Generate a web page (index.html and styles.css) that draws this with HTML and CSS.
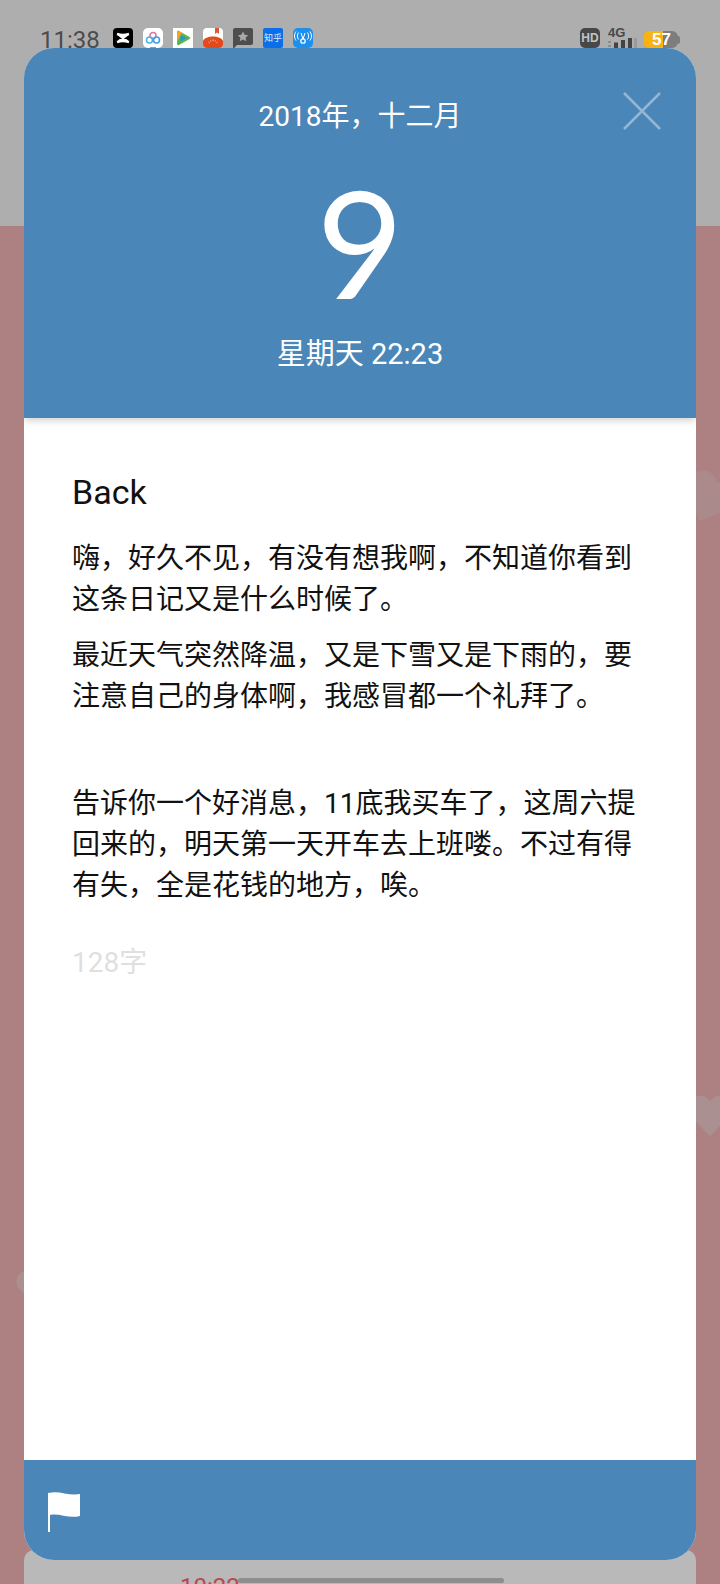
FILE: index.html
```html
<!DOCTYPE html>
<html lang="zh-CN">
<head>
    <meta charset="UTF-8">
    <title>Diary</title>
    <link rel="stylesheet" href="styles.css">
</head>
<body>
    <div class="screen">
        <div class="topArea">
            <div class="statusBar">
                <span class="clock">11:38</span>
                <div class="appIcons">
                    <svg class="appIcon" viewBox="0 0 20 20"><rect width="20" height="20" rx="4" fill="#000"/><path d="M4 6c3 1 9 1 12 0M4 14c3-1 9-1 12 0M5.500 6.500l9 7M14.500 6.500l-9 7" stroke="#fff" stroke-width="2.400" fill="none"/></svg>
                    <svg class="appIcon" viewBox="0 0 20 20"><rect width="20" height="20" rx="5" fill="#fff"/><path d="M7 19h6v1H7z" fill="#9a8ec8"/><circle cx="10" cy="7.500" r="3" fill="none" stroke="#e8709a" stroke-width="1.500"/><circle cx="6.500" cy="12" r="3" fill="none" stroke="#4ab4e6" stroke-width="1.600"/><circle cx="13.500" cy="12" r="3" fill="none" stroke="#3c9fe0" stroke-width="1.600"/></svg>
                    <svg class="appIcon" viewBox="0 0 20 20"><rect width="20" height="20" fill="#fff"/><path d="M4 4c0-1 1-1.500 2-1l10.500 6c1 .6 1 1.400 0 2L6 17c-1 .5-2 0-2-1z" fill="#56b848"/><path d="M4 4c0-1 1-1.500 2-1l3 1.700-5 9z" fill="#f2a422"/><path d="M7.500 7l6 3-6 3.500z" fill="#2a92e0"/></svg>
                    <svg class="appIcon" viewBox="0 0 20 20"><rect width="20" height="20" rx="4" fill="#fff"/><path d="M12 0h4v6l-2-1.500L12 6z" fill="#d9583a"/><path d="M0 13c2-6 18-6 20 0v3a4 4 0 0 1-4 4H4a4 4 0 0 1-4-4z" fill="#e2491c"/><path d="M5.500 14l1 .8M10 11.500v1.500M14.500 14l-1 .8M7.500 12.500l.5 1M12.500 12.500l-.5 1" stroke="#fbd9a0" stroke-width="1"/></svg>
                    <svg class="appIcon" viewBox="0 0 20 20"><path d="M2 0h16a2 2 0 0 1 2 2v13a2 2 0 0 1-2 2H4l-3 3H0V2a2 2 0 0 1 2-2z" fill="#4e4e4e"/><path d="M10 3.500l1.700 3.300 3.500.5-2.600 2.400.7 3.500-3.300-1.700-3.300 1.700.7-3.500-2.600-2.400 3.500-.5z" fill="#a8a8a8"/></svg>
                    <div class="zhihuIcon">知乎</div>
                    <svg class="appIcon" viewBox="0 0 20 20"><rect width="20" height="20" rx="5" fill="#1d8fec"/><circle cx="10" cy="13" r="2.200" fill="none" stroke="#fff" stroke-width="1.300"/><path d="M8 5l2 6 2-6M5.500 4.500c-1.500 2-1.500 5 0 7M14.500 4.500c1.500 2 1.500 5 0 7M3 3.500c-2 3-2 6 0 9M17 3.500c2 3 2 6 0 9" stroke="#fff" stroke-width="1" fill="none"/></svg>
                </div>
                <div class="statusRight">
                    <div class="hdBadge">HD</div>
                    <div class="signal">
                        <span class="signalLabel">4G</span>
                        <svg class="signalBars" viewBox="0 0 30 10"><rect x="0" y="3" width="3" height="2" fill="#8d8d8d"/><rect x="0" y="7" width="3" height="2" fill="#8d8d8d"/><rect x="6" y="4.500" width="4" height="5.500" fill="#444"/><rect x="13" y="2" width="4" height="8" fill="#444"/><rect x="20" y="0" width="4" height="10" fill="#444"/><rect x="26" y="0" width="3" height="10" fill="#9a9a9a"/></svg>
                    </div>
                    <div class="battery"><span class="batteryLevel"></span><span class="batteryText">57</span></div>
                    <span class="batteryNub"></span>
                </div>
            </div>
        </div>
        <div class="bgArea">
            <svg class="heart heartA" viewBox="0 0 40 40"><path d="M20 37L4 20C-3 10 12-2 20 9c8-11 23 1 16 11z"/></svg>
            <svg class="heart heartB" viewBox="0 0 40 40"><path d="M20 37L4 20C-3 10 12-2 20 9c8-11 23 1 16 11z"/></svg>
            <svg class="heart heartC" viewBox="0 0 40 40"><path d="M20 37L4 20C-3 10 12-2 20 9c8-11 23 1 16 11z"/></svg>
        </div>
        <div class="behindCard">
            <span class="behindTime">10:22</span>
        </div>
        <div class="homeBar"></div>

        <div class="diaryCard">
            <header class="diaryHead">
                <div class="headMonth">2018年，十二月</div>
                <svg class="closeIcon" viewBox="0 0 38 38"><path d="M1 1l36 36M37 1L1 37" stroke="#fff" stroke-width="2.500" fill="none"/></svg>
                <div class="headDay">9</div>
                <div class="headTime">星期天 22:23</div>
            </header>
            <main class="diaryBody">
                <p class="backTitle">Back</p>
                <p>嗨，好久不见，有没有想我啊，不知道你看到这条日记又是什么时候了。</p>
                <p>最近天气突然降温，又是下雪又是下雨的，要注意自己的身体啊，我感冒都一个礼拜了。</p>
                <p class="emptyLine"><br></p>
                <p>告诉你一个好消息，11底我买车了，这周六提回来的，明天第一天开车去上班喽。不过有得有失，全是花钱的地方，唉。</p>
                <p class="wordCount">128字</p>
            </main>
            <footer class="diaryFoot">
                <svg class="flagIcon" viewBox="0 0 32 40"><path d="M0 1c11-3 20 3 32 1v22c-12 3-20-3-30-1v17H0z" fill="#fff"/></svg>
            </footer>
        </div>
    </div>
</body>
</html>
```

FILE: styles.css
```css
* {
    box-sizing: border-box;
}

body {
    margin: 0;
    font-family: Roboto, "Noto Sans CJK SC", sans-serif;
    overflow: hidden;
}

.screen {
    position: relative;
    width: 720px;
    height: 1584px;
    display: flex;
    flex-direction: column;
    background-color: #ad8082;
    overflow: hidden;
}

.topArea {
    height: 226px;
    background-color: #aeaeae;
}

.statusBar {
    display: flex;
    align-items: flex-start;
    padding: 28px 0 0 40px;
}

.clock {
    font-size: 24px;
    line-height: 22px;
    margin-top: 1px;
    color: #4c4c4c;
    width: 73px;
}

.appIcons {
    display: flex;
    gap: 10px;
}

.appIcon {
    width: 20px;
    height: 20px;
    display: block;
}

.zhihuIcon {
    width: 20px;
    height: 20px;
    border-radius: 2px;
    background-color: #0a6fe8;
    color: #dfeeff;
    font-size: 9px;
    line-height: 20px;
    text-align: center;
}

.statusRight {
    display: flex;
    align-items: flex-start;
    margin-left: 267px;
}

.hdBadge {
    width: 20px;
    height: 20px;
    border-radius: 5px;
    background-color: #484848;
    color: #c4c4c4;
    font-family: "Liberation Sans", sans-serif;
    font-weight: bold;
    font-size: 12px;
    line-height: 20px;
    text-align: center;
}

.signal {
    width: 30px;
    margin-left: 8px;
    display: flex;
    flex-direction: column;
}

.signalLabel {
    font-family: "Liberation Sans", sans-serif;
    font-weight: bold;
    font-size: 13px;
    line-height: 10px;
    color: #484848;
}

.signalBars {
    width: 30px;
    height: 10px;
    display: block;
}

.battery {
    position: relative;
    width: 34px;
    height: 17px;
    margin: 3px 0 0 6px;
    border-radius: 4px 6px 6px 4px;
    background-color: #7d7d7d;
    overflow: hidden;
}

.batteryLevel {
    display: block;
    width: 56%;
    height: 100%;
    background-color: #f9b20f;
}

.batteryText {
    position: absolute;
    left: 8px;
    top: 0;
    font-family: "Liberation Sans", sans-serif;
    font-weight: bold;
    font-size: 17px;
    line-height: 18px;
    color: #fff;
}

.batteryNub {
    width: 2px;
    height: 8px;
    margin-top: 8px;
    border-radius: 0 2px 2px 0;
    background-color: #7d7d7d;
}

.bgArea {
    position: relative;
    flex: 1;
}

.heart {
    position: absolute;
    fill: #a8b0b0;
    opacity: 0.35;
}

.heartA {
    width: 60px;
    height: 60px;
    left: 680px;
    top: 242px;
    opacity: 0.22;
    transform: rotate(25deg);
}

.heartB {
    width: 50px;
    height: 50px;
    left: 685px;
    top: 864px;
}

.heartC {
    width: 46px;
    height: 46px;
    left: 14px;
    top: 1039px;
}

.behindCard {
    position: absolute;
    left: 24px;
    right: 24px;
    bottom: 0;
    height: 34px;
    border-radius: 10px 10px 0 0;
    background-color: #b9b9b9;
    overflow: hidden;
}

.behindTime {
    position: absolute;
    left: 156px;
    top: 23px;
    font-size: 24px;
    color: #b84a4e;
}

.homeBar {
    position: absolute;
    left: 238px;
    bottom: 1px;
    width: 266px;
    height: 5px;
    border-radius: 3px;
    background-color: #8e8e8e;
}

.diaryCard {
    position: absolute;
    left: 24px;
    top: 48px;
    width: 672px;
    height: 1512px;
    border-radius: 30px;
    background-color: #fff;
    display: flex;
    flex-direction: column;
    overflow: hidden;
}

.diaryHead {
    position: relative;
    height: 370px;
    background-color: #4a86b8;
    color: #fff;
    text-align: center;
    box-shadow: 0 2px 8px rgba(0, 0, 0, 0.2);
    display: flex;
    flex-direction: column;
    align-items: center;
}

.headMonth {
    font-size: 28px;
    line-height: 36px;
    margin-top: 51px;
}

.closeIcon {
    position: absolute;
    right: 35px;
    top: 44px;
    width: 38px;
    height: 38px;
    opacity: 0.4;
}

.headDay {
    font-family: Lato, sans-serif;
    font-size: 150px;
    line-height: 150px;
    margin-top: 31px;
}

.headTime {
    font-size: 29px;
    line-height: 36px;
    margin-top: 20px;
}

.diaryBody {
    flex: 1;
    padding: 54px 48px 0;
    font-size: 28px;
    line-height: 41px;
    color: #111;
}

.diaryBody p {
    margin: 0 0 15px;
}

.diaryBody .backTitle {
    font-size: 34px;
    margin-bottom: 25px;
}

.diaryBody .emptyLine {
    line-height: 36px;
}

.diaryBody .wordCount {
    margin-top: 36px;
    color: #dfdfdf;
}

.diaryFoot {
    height: 100px;
    background-color: #4a86b8;
    padding: 32px 0 0 24px;
}

.flagIcon {
    width: 32px;
    height: 40px;
    display: block;
}
```
